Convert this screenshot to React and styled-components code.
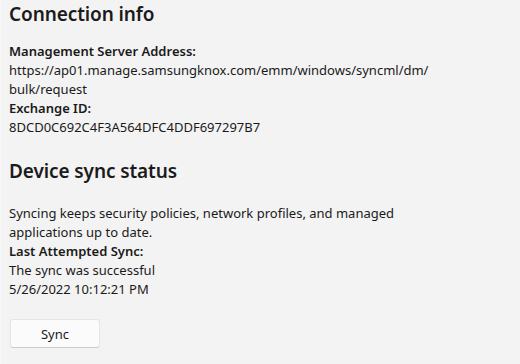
import React from 'react';
import styled, { createGlobalStyle } from 'styled-components';

const Global = createGlobalStyle`
  html, body {
    margin: 0;
    padding: 0;
    background: #f3f3f3;
  }
  body {
    font-family: 'Noto Sans', 'Open Sans', sans-serif;
    color: #1a1a1a;
  }
`;

const Page = styled.div`
  width: 520px;
  height: 364px;
  box-sizing: border-box;
  padding: 0 8px;
  overflow: hidden;
  border-left: 1px solid #f8f8f8;
`;

const Section = styled.section`
  display: flex;
  flex-direction: column;
  margin-bottom: ${p => p.gap || 0}px;
`;

const Heading = styled.h2`
  margin: 0 0 ${p => p.after}px;
  font-size: 19px;
  line-height: 28px;
  font-weight: 600;
  letter-spacing: -0.1px;
  color: #1b1b1b;
`;

const Label = styled.div`
  font-size: 13px;
  line-height: 19px;
  font-weight: 600;
`;

const Value = styled.div`
  font-size: 13px;
  line-height: 19px;
  font-weight: 400;
`;

const Button = styled.button`
  width: 90px;
  height: 29px;
  margin: 20px 0 0 1px;
  box-sizing: border-box;
  background: #fbfbfb;
  border: 1px solid #e5e5e5;
  border-bottom-color: #cccccc;
  border-radius: 3px;
  font-family: inherit;
  font-size: 13px;
  color: #1a1a1a;
  padding: 0;
`;

export default function App() {
  return (
    <Page>
      <Global />
      <Section gap={20}>
        <Heading after={14}>Connection info</Heading>
        <Label>Management Server Address:</Label>
        <Value>
          https://ap01.manage.samsungknox.com/emm/windows/syncml/dm/
          <br />
          bulk/request
        </Value>
        <Label>Exchange ID:</Label>
        <Value>8DCD0C692C4F3A564DFC4DDF697297B7</Value>
      </Section>
      <Section>
        <Heading after={19}>Device sync status</Heading>
        <Value>
          Syncing keeps security policies, network profiles, and managed
          <br />
          applications up to date.
        </Value>
        <Label>Last Attempted Sync:</Label>
        <Value>The sync was successful</Value>
        <Value>5/26/2022 10:12:21 PM</Value>
      </Section>
      <Button>Sync</Button>
    </Page>
  );
}
